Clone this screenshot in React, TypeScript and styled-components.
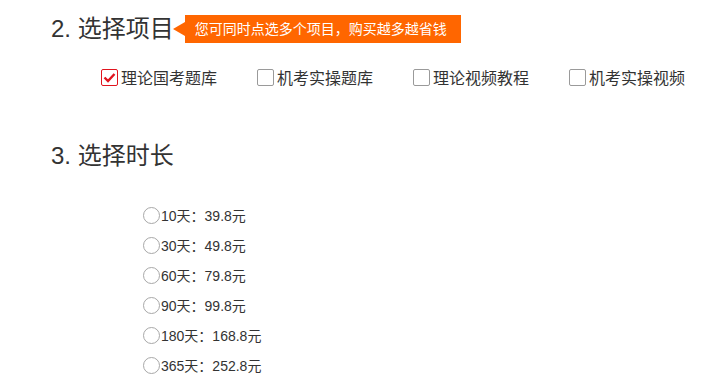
import React, { useState } from 'react';
import styled, { createGlobalStyle } from 'styled-components';

const GlobalStyle = createGlobalStyle`
    body {
        margin: 0;
        background: #fff;
        font-family: "Liberation Sans", "Noto Sans CJK SC", sans-serif;
        color: #333;
    }
`;

const PROJECTS = ['理论国考题库', '机考实操题库', '理论视频教程', '机考实操视频'];
const DURATIONS = [
    { days: 10, price: '39.8' },
    { days: 30, price: '49.8' },
    { days: 60, price: '79.8' },
    { days: 90, price: '99.8' },
    { days: 180, price: '168.8' },
    { days: 365, price: '252.8' }
];

const App: React.FC = () => {
    const [picked, updatePicked] = useState<Array<string>>([PROJECTS[0]]);
    const [duration, updateDuration] = useState<number | null>(null);

    const toggle = (name: string) =>
        updatePicked(picked.includes(name) ? picked.filter(p => p !== name) : [...picked, name]);

    return (
        <Page>
            <GlobalStyle />
            <HeadingRow>
                <Heading>2. 选择项目</Heading>
                <Tip>您可同时点选多个项目，购买越多越省钱</Tip>
            </HeadingRow>
            <CheckRow>
                {PROJECTS.map(name => {
                    const on = picked.includes(name);
                    return (
                        <CheckItem key={name} onClick={() => toggle(name)}>
                            <Box $checked={on}>
                                {on && (
                                    <svg width="13" height="11" viewBox="0 0 13 11">
                                        <polyline
                                            points="1.5,5.5 5,9 11.5,2"
                                            fill="none"
                                            stroke="#e0141e"
                                            strokeWidth="2.4"
                                        />
                                    </svg>
                                )}
                            </Box>
                            {name}
                        </CheckItem>
                    );
                })}
            </CheckRow>
            <SecondHeading>3. 选择时长</SecondHeading>
            <RadioList>
                {DURATIONS.map(({ days, price }) => (
                    <RadioItem key={days} onClick={() => updateDuration(days)}>
                        <Dot $checked={duration === days} />
                        {days}天：{price}元
                    </RadioItem>
                ))}
            </RadioList>
        </Page>
    );
};

const Page = styled.div`
    padding: 15px 0 0 51px;
`;

const HeadingRow = styled.div`
    display: flex;
    align-items: center;
    height: 28px;
`;

const Heading = styled.h2`
    margin: 0;
    font-size: 24px;
    font-weight: normal;
    line-height: 28px;
    color: #333;
`;

const Tip = styled.div`
    position: relative;
    margin-left: 11px;
    height: 28px;
    line-height: 28px;
    padding: 0 14px 0 10px;
    background: #ff6600;
    color: #fff;
    font-size: 14px;
    &::before {
        content: '';
        position: absolute;
        left: -12px;
        top: 50%;
        margin-top: -7px;
        border-style: solid;
        border-width: 7px 12px 7px 0;
        border-color: transparent #ff6600 transparent transparent;
    }
`;

const CheckRow = styled.div`
    display: flex;
    gap: 40px;
    margin: 24px 0 0 50px;
`;

const CheckItem = styled.label`
    display: flex;
    align-items: center;
    gap: 3px;
    height: 20px;
    font-size: 16px;
    color: #333;
    cursor: pointer;
`;

const Box = styled.span<{ $checked: boolean }>`
    box-sizing: border-box;
    display: flex;
    align-items: center;
    justify-content: center;
    width: 17px;
    height: 17px;
    border: 1px solid ${p => (p.$checked ? '#e0141e' : '#9a9a9a')};
    border-radius: 2px;
    background: #fff;
`;

const SecondHeading = styled(Heading)`
    margin-top: 55px;
`;

const RadioList = styled.div`
    display: flex;
    flex-direction: column;
    margin: 30px 0 0 92px;
`;

const RadioItem = styled.label`
    display: flex;
    align-items: center;
    height: 30px;
    font-size: 14px;
    color: #333;
    cursor: pointer;
`;

const Dot = styled.span<{ $checked: boolean }>`
    box-sizing: border-box;
    width: 17px;
    height: 17px;
    margin-right: 1px;
    border-radius: 50%;
    border: 1.5px solid #a8a8a8;
    background: ${p => (p.$checked ? 'radial-gradient(circle, #333 3px, #fff 4px)' : '#fff')};
`;

export default App;
